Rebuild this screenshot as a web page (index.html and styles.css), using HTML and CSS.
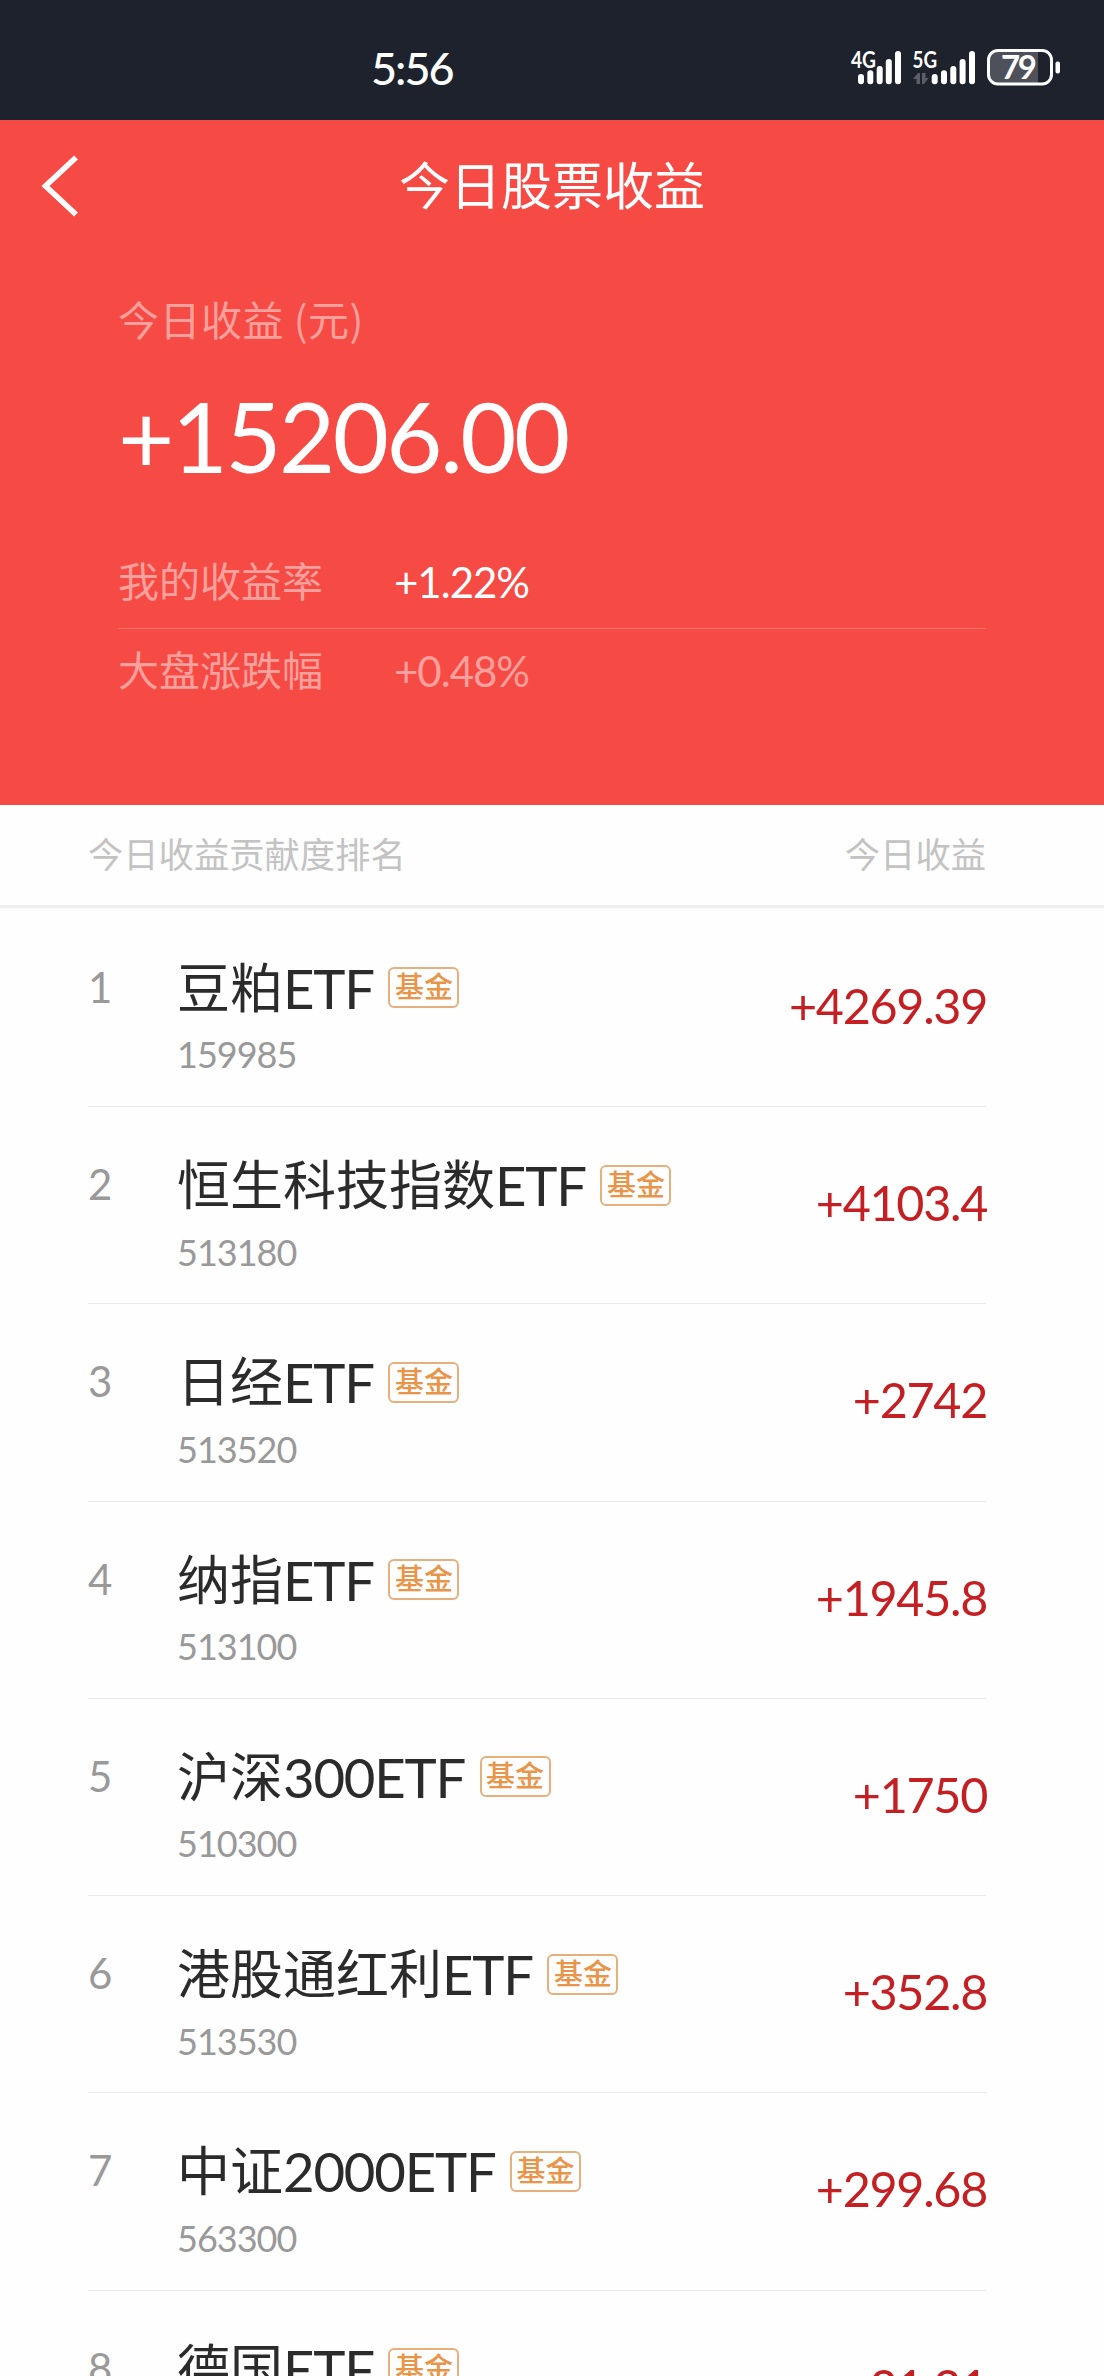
FILE: index.html
```html
<!DOCTYPE html>
<html lang="zh-CN">
<head>
<meta charset="utf-8">
<title>今日股票收益</title>
<link rel="stylesheet" href="styles.css">
</head>
<body>
<header class="status">
  <span class="time">5:56</span>
  <svg class="status-icons" width="214" height="50" viewBox="850 42 214 50">
    <g class="net">
      <text x="851" y="67.500" textLength="25" lengthAdjust="spacingAndGlyphs">4G</text>
      <text x="912.500" y="67.500" textLength="24.500" lengthAdjust="spacingAndGlyphs">5G</text>
    </g>
    <g stroke="#fff" stroke-width="6" stroke-linecap="round">
      <path d="M861 77V81.3M870.3 73.3V81.3M879.7 69V81.3M888.8 62V81.3M898 54V81.3"/>
      <path d="M934.7 77V81.3M944 73.3V81.3M953.3 69V81.3M962.6 62V81.3M972 54V81.3"/>
    </g>
    <path d="M918 73h2v11h-3.500v-5h-3.500zM922 73h3.500v5h3L924 84h-2z" fill="#5b5e65"/>
    <rect x="990" y="52" width="48" height="31" rx="6" fill="#4f515a"/>
    <rect x="1030" y="52" width="8" height="31" fill="#4f515a"/>
    <rect x="988.500" y="50.500" width="63" height="33.500" rx="9.500" fill="none" stroke="#fff" stroke-width="3"/>
    <rect x="1055.500" y="61.500" width="4.500" height="12" rx="2" fill="#fff"/>
    <text class="level" x="1001" y="79" textLength="36">79</text>
  </svg>
</header>
<section class="hero">
  <nav class="nav">
    <svg class="back" width="60" height="70" viewBox="0 0 60 70"><path d="M46 6.500L15.500 35L46 63.500" fill="none" stroke="#fff" stroke-width="5.500"/></svg>
    <h1>今日股票收益</h1>
  </nav>
  <div class="summary">
    <div class="caption">今日收益 (元)</div>
    <div class="total">+15206.00</div>
    <div class="rate mine"><span class="rate-name">我的收益率</span><span class="pct">+1.22%</span></div>
    <div class="rate market"><span class="rate-name">大盘涨跌幅</span><span class="pct">+0.48%</span></div>
  </div>
</section>
<div class="list-head"><span>今日收益贡献度排名</span><span>今日收益</span></div>
<ol class="list">
  <li><span class="rank">1</span><div class="info"><div class="name">豆粕<b>ETF</b><i>基金</i></div><div class="code">159985</div></div><span class="gain">+4269.39</span></li>
  <li><span class="rank">2</span><div class="info"><div class="name">恒生科技指数<b>ETF</b><i>基金</i></div><div class="code">513180</div></div><span class="gain">+4103.4</span></li>
  <li><span class="rank">3</span><div class="info"><div class="name">日经<b>ETF</b><i>基金</i></div><div class="code">513520</div></div><span class="gain">+2742</span></li>
  <li><span class="rank">4</span><div class="info"><div class="name">纳指<b>ETF</b><i>基金</i></div><div class="code">513100</div></div><span class="gain">+1945.8</span></li>
  <li><span class="rank">5</span><div class="info"><div class="name">沪深<b>300ETF</b><i>基金</i></div><div class="code">510300</div></div><span class="gain">+1750</span></li>
  <li><span class="rank">6</span><div class="info"><div class="name">港股通红利<b>ETF</b><i>基金</i></div><div class="code">513530</div></div><span class="gain">+352.8</span></li>
  <li><span class="rank">7</span><div class="info"><div class="name">中证<b>2000ETF</b><i>基金</i></div><div class="code">563300</div></div><span class="gain">+299.68</span></li>
  <li><span class="rank">8</span><div class="info"><div class="name">德国<b>ETF</b><i>基金</i></div></div><span class="gain">+21.21</span></li>
</ol>
</body>
</html>
```
FILE: styles.css
```css
* { box-sizing: border-box; }
html, body { margin: 0; }
body {
  width: 1104px;
  height: 2376px;
  overflow: hidden;
  background: #fefefe;
  color: #2b2b2b;
  font-family: Lato, "Noto Sans CJK SC", sans-serif;
  display: flex;
  flex-direction: column;
}
.status {
  flex: none;
  height: 120px;
  padding: 0 40px 0 371px;
  background: #1e222d;
  color: #fff;
  display: flex;
  justify-content: space-between;
  align-items: flex-start;
}
.time { font-size: 45px; font-weight: 500; line-height: 54px; margin-top: 41px; letter-spacing: -2px; }
.status-icons { margin-top: 42px; }
.net text { font: 700 23px Lato, sans-serif; fill: #fff; }
.level { font: 700 33px Lato, sans-serif; fill: #fff; }

.hero { flex: none; height: 684.700px; background: #f64a45; color: #fff; }
.nav { height: 132px; display: grid; grid-template-columns: 120px 1fr 120px; align-items: center; }
.back { margin-left: 30px; }
h1 { margin: 0; font-size: 51px; font-weight: 400; line-height: 60px; text-align: center; }
.summary { padding: 37px 118px 0; }
.caption { font-family: "Noto Sans CJK SC", sans-serif; font-size: 41px; line-height: 58px; letter-spacing: .5px; color: #ffa09c; }
.total { font-size: 97px; line-height: 116px; margin: 30.500px 0 51.500px; letter-spacing: -2.600px; }
.rate { height: 84px; display: flex; align-items: center; font-size: 41px; line-height: 60px; }
.mine { padding-bottom: 10px; border-bottom: 1px solid #fb6f6b; }
.rate-name { width: 276px; color: #ffa09c; }
.pct { font-size: 42px; letter-spacing: -1px; }
.market { color: #ffa09c; }

.list-head {
  flex: none;
  height: 103px;
  padding: 0 118px 0 88px;
  border-bottom: 3px solid #eee;
  color: #c3c3c3;
  font-size: 35.300px;
  line-height: 100px;
  display: flex;
  justify-content: space-between;
}
.list { flex: none; list-style: none; margin: 0; padding: 2.300px 118px 0 88px; }
.list li { height: 197.250px; border-bottom: 1px solid #ebebeb; display: flex; }
.rank { width: 89px; padding-top: 51px; font-size: 42px; line-height: 52px; color: #999; }
.info { flex: 1; padding-top: 48px; }
.name { display: flex; align-items: center; height: 60px; font-size: 53px; line-height: 60px; }
.name b { font-size: 54.500px; font-weight: 400; letter-spacing: -1.200px; }
.name i {
  margin-left: 14.500px;
  width: 71px;
  height: 41px;
  border: 2px solid #e6b07c;
  border-radius: 6px;
  color: #e8954a;
  font-size: 29px;
  font-style: normal;
  font-weight: 500;
  line-height: 36px;
  text-align: center;
}
.code { margin-top: 14.500px; font-size: 36px; line-height: 44px; color: #999; letter-spacing: -1px; }
.gain { margin-right: -1px; padding-top: 66px; font-size: 48.500px; line-height: 58px; color: #c42024; letter-spacing: -1.300px; }
```
